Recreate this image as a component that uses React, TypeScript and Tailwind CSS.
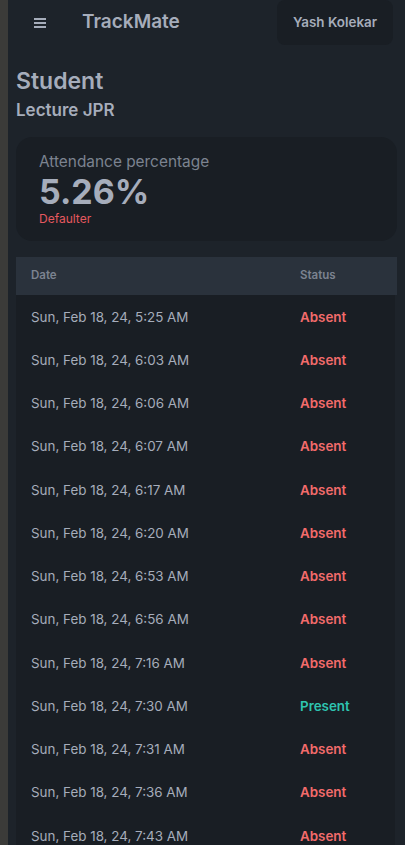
import React from "react";

const rows: [string, boolean][] = [
  ["Sun, Feb 18, 24, 5:25 AM", false],
  ["Sun, Feb 18, 24, 6:03 AM", false],
  ["Sun, Feb 18, 24, 6:06 AM", false],
  ["Sun, Feb 18, 24, 6:07 AM", false],
  ["Sun, Feb 18, 24, 6:17 AM", false],
  ["Sun, Feb 18, 24, 6:20 AM", false],
  ["Sun, Feb 18, 24, 6:53 AM", false],
  ["Sun, Feb 18, 24, 6:56 AM", false],
  ["Sun, Feb 18, 24, 7:16 AM", false],
  ["Sun, Feb 18, 24, 7:30 AM", true],
  ["Sun, Feb 18, 24, 7:31 AM", false],
  ["Sun, Feb 18, 24, 7:36 AM", false],
  ["Sun, Feb 18, 24, 7:43 AM", false],
];

export default function App() {
  return (
    <div
      className="flex h-[845px] w-[405px] overflow-hidden bg-[#1d232a] text-[#a6adbb]"
      style={{ fontFamily: "Inter, 'Noto Sans', sans-serif" }}
    >
      <div className="w-[8px] shrink-0 bg-[#3b3b39]" />
      <div className="flex min-w-0 flex-1 flex-col">
        <div className="flex h-[45px] items-center">
          <div className="ml-[26px] flex w-[12px] flex-col gap-[2px]">
            <span className="h-[2px] w-[12px] bg-[#a6adbb]" />
            <span className="h-[2px] w-[12px] bg-[#a6adbb]" />
            <span className="h-[2px] w-[12px] bg-[#a6adbb]" />
          </div>
          <div className="ml-[36px] text-[19px] font-semibold text-[#a6adbb]">TrackMate</div>
          <div className="ml-auto mr-[12px] flex h-[45px] w-[116px] items-center justify-center rounded-lg bg-[#191e24] pb-[1px] text-[13.4px] font-semibold text-[#a6adbb]">
            Yash Kolekar
          </div>
        </div>
        <div className="px-[8px] pt-[20px]">
          <div className="text-[23px] font-semibold leading-[32px]">Student</div>
          <div className="mt-[1px] text-[17px] font-semibold leading-[24px]">Lecture JPR</div>
          <div className="mt-[15px] flex h-[104px] flex-col rounded-2xl bg-[#191e24] px-[23px] pt-[15px]">
            <div className="text-[15.4px] leading-[20px] text-[#7c8390]">Attendance percentage</div>
            <div className="mt-[3px] text-[34px] font-bold leading-[34px] text-[#a6adbb]">5.26%</div>
            <div className="mt-[2px] text-[12px] leading-[16px] text-[#e5585f]">Defaulter</div>
          </div>
          <div className="mt-[16px]">
            <div className="flex h-[38px] items-center bg-[#2a323c] text-[11.5px] font-semibold text-[#7c8390]">
              <div className="w-[284px] pl-[15px]">Date</div>
              <div>Status</div>
            </div>
            <div className="mr-[2px] bg-[#191e24]">
              {rows.map(([d, p], i) => (
                <div key={i} className="flex h-[43.25px] items-center text-[13.4px]">
                  <div className="w-[284px] pl-[15px] text-[#a6adbb]">{d}</div>
                  <div className={p ? "font-semibold text-[#2ec4b0]" : "font-semibold text-[#f26b6b]"}>
                    {p ? "Present" : "Absent"}
                  </div>
                </div>
              ))}
            </div>
          </div>
        </div>
      </div>
    </div>
  );
}
